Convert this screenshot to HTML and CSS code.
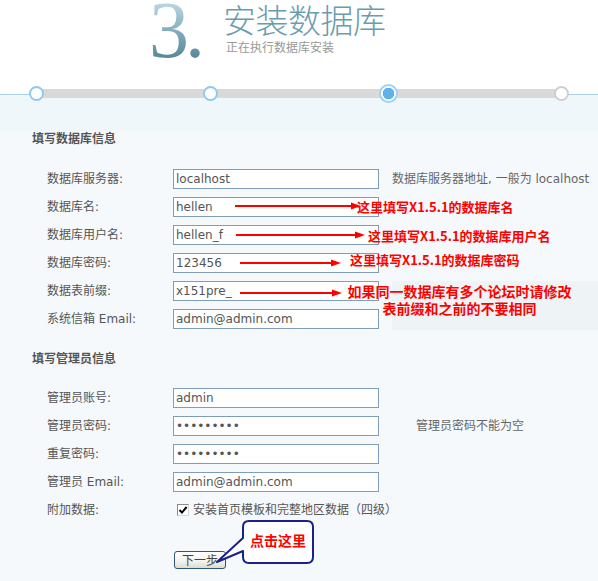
FILE: index.html
```html
<!DOCTYPE html>
<html lang="zh-CN">
<head>
<meta charset="utf-8">
<title>安装数据库</title>
<link rel="stylesheet" href="styles.css">
</head>
<body>
<div class="page">
  <header class="head">
    <div class="num">3.</div>
    <div class="titles">
      <div class="title">安装数据库</div>
      <div class="sub">正在执行数据库安装</div>
    </div>
  </header>

  <div class="steps">
    <div class="track">
      <span class="dot done"></span>
      <span class="dot done"></span>
      <span class="dot active"></span>
      <span class="dot todo"></span>
    </div>
  </div>

  <main class="main">
    <section class="sec first">
      <h2 class="sec-title">填写数据库信息</h2>
      <div class="grid">
        <label class="lbl">数据库服务器:</label>
        <input class="inp" type="text" value="localhost">
        <div class="hint">数据库服务器地址, 一般为 localhost</div>

        <label class="lbl">数据库名:</label>
        <input class="inp" type="text" value="hellen">

        <label class="lbl">数据库用户名:</label>
        <input class="inp" type="text" value="hellen_f">

        <label class="lbl">数据库密码:</label>
        <input class="inp" type="text" value="123456">

        <div class="hint-box"></div>

        <label class="lbl">数据表前缀:</label>
        <input class="inp" type="text" value="x151pre_">

        <label class="lbl">系统信箱 Email:</label>
        <input class="inp" type="text" value="admin@admin.com">
      </div>
    </section>

    <section class="sec second">
      <h2 class="sec-title">填写管理员信息</h2>
      <div class="grid admin">
        <label class="lbl">管理员账号:</label>
        <input class="inp" type="text" value="admin">

        <label class="lbl">管理员密码:</label>
        <input class="inp" type="password" value="123456789">
        <div class="hint hint-pw">管理员密码不能为空</div>

        <label class="lbl">重复密码:</label>
        <input class="inp" type="password" value="123456789">

        <label class="lbl">管理员 Email:</label>
        <input class="inp" type="text" value="admin@admin.com">

        <label class="lbl">附加数据:</label>
        <div class="check-row">
          <span class="cb"><svg width="10" height="10" viewBox="0 0 10 10"><path d="M1.5 5 L4 7.6 L8.6 2" fill="none" stroke="#000" stroke-width="2"/></svg></span>
          <span class="cb-text">安装首页模板和完整地区数据（四级）</span>
        </div>
      </div>
      <div class="actions">
        <button class="btn" type="button">下一步</button>
      </div>
    </section>
  </main>

  <div class="overlay">
    <svg class="arrows" width="598" height="581" viewBox="0 0 598 581">
      <g stroke="#ff0000" stroke-width="2" fill="none">
        <path d="M235 206 H354"/>
        <path d="M236 235 H357"/>
        <path d="M240 263 H333"/>
        <path d="M240 293 H334"/>
      </g>
      <g fill="#ff0000">
        <polygon points="351,202.5 361,206 351,209.5"/>
        <polygon points="355,231.5 365,235 355,238.5"/>
        <polygon points="331,259.5 341,263 331,266.5"/>
        <polygon points="332,289.5 342,293 332,296.5"/>
      </g>
      <path class="bubble" d="M249 521 H307 Q313 521 313 527 V557 Q313 563 307 563 H249 Q243 563 243 557 V551 L217 562 L243 538 V527 Q243 521 249 521 Z" fill="#ffffff" stroke="#1b2186" stroke-width="2" stroke-linejoin="round"/>
    </svg>
    <div class="note n1">这里填写X1.5.1的数据库名</div>
    <div class="note n2">这里填写X1.5.1的数据库用户名</div>
    <div class="note n3">这里填写X1.5.1的数据库密码</div>
    <div class="note n4">如果同一数据库有多个论坛时请修改<br>表前缀和之前的不要相同</div>
    <div class="call-text">点击这里</div>
  </div>
</div>
</body>
</html>
```

FILE: styles.css
```css
* {
  box-sizing: border-box;
}

html,
body {
  margin: 0;
  padding: 0;
}

body {
  background: #f5f9fc;
  font-family: "DejaVu Sans", "Noto Sans CJK SC", sans-serif;
  font-size: 12px;
  color: #555;
}

.page {
  position: relative;
  width: 598px;
  height: 581px;
  overflow: hidden;
}

/* ---------- header ---------- */
.head {
  height: 89px;
  background: #fff;
  display: flex;
  padding-left: 149px;
}

.num {
  width: 74px;
  height: 60px;
  font-family: "Liberation Serif", serif;
  font-size: 80px;
  line-height: 60px;
  letter-spacing: -4px;
  background: linear-gradient(#bcd6e1 3px, #86adbd 30px, #5a899b 57px);
  -webkit-background-clip: text;
  background-clip: text;
  color: transparent;
}

.titles {
  font-family: "Noto Sans CJK SC", sans-serif;
}

.title {
  font-size: 33px;
  line-height: 38px;
  font-weight: 300;
  letter-spacing: -0.5px;
  color: #6a9cae;
}

.sub {
  margin-left: 3px;
  font-size: 12px;
  line-height: 18px;
  color: #999;
}

/* ---------- steps ---------- */
.steps {
  height: 9px;
  background: linear-gradient(#fff 0 5px, #a9d2e2 5px 6px, #eff7fb 6px);
}

.track {
  margin: 0 29px;
  height: 9px;
  display: flex;
  justify-content: space-between;
  align-items: center;
  background: linear-gradient(#d9d9d9, #d9d9d9) 7px 0 / calc(100% - 14px) 100% no-repeat;
}

.dot {
  display: block;
  width: 15px;
  height: 15px;
  border-radius: 50%;
  background: #fff;
  flex: none;
}

.dot.done {
  border: 2.5px solid #8ccaf0;
}

.dot.active {
  width: 19px;
  height: 19px;
  margin-left: 3px;
  margin-right: -3px;
  border: 2px solid #9fd2f4;
  background: radial-gradient(circle, #5fb3ea 0 5px, #4fa6e2 5.5px, #fff 6px);
}

.dot.todo {
  border: 2.5px solid #cfcfcf;
}

/* ---------- main ---------- */
.main {
  height: 483px;
  background: linear-gradient(#eff7fb 0 33px, #f5f9fc 33px);
}

.sec.first {
  padding-top: 32px;
}

.sec.second {
  margin-top: 21px;
}

.sec-title {
  margin: 0;
  padding-left: 32px;
  font-family: "Noto Sans CJK SC", sans-serif;
  font-size: 12px;
  line-height: 16px;
  font-weight: bold;
  color: #555;
}

.grid {
  display: grid;
  grid-template-columns: 126px 219px 1fr;
  grid-auto-rows: 20px;
  row-gap: 8px;
  align-items: center;
  padding-left: 47px;
  margin-top: 23px;
}

.grid.admin {
  margin-top: 22px;
}

.lbl {
  grid-column: 1;
  font-size: 12px;
  line-height: 16px;
  color: #555;
  white-space: nowrap;
}

.inp {
  grid-column: 2;
  display: block;
  width: 206px;
  height: 20px;
  margin: 0;
  padding: 0 2px;
  border: 1px solid #7f9db9;
  border-radius: 0;
  background: #fff;
  font-family: "DejaVu Sans", sans-serif;
  font-size: 12px;
  color: #555;
  outline: none;
}

.hint {
  grid-column: 3;
  font-size: 12px;
  line-height: 16px;
  color: #666;
  white-space: nowrap;
}

.hint-pw {
  padding-left: 24px;
}

.hint-box {
  grid-column: 3;
  grid-row: 5 / span 2;
  align-self: stretch;
  margin-bottom: -1px;
  background: #eef3f6;
}

.check-row {
  grid-column: 2 / span 2;
  display: flex;
  align-items: center;
  gap: 4px;
  padding-left: 4px;
}

.cb {
  width: 12px;
  height: 12px;
  flex: none;
  display: flex;
  align-items: center;
  justify-content: center;
  border: 1px solid #8a8a8a;
  border-right-color: #d8d8d8;
  border-bottom-color: #d8d8d8;
  background: #fff;
}

.cb-text {
  font-size: 12px;
  line-height: 16px;
  color: #555;
  white-space: nowrap;
}

.actions {
  margin-top: 31px;
  padding-left: 174px;
}

.btn {
  display: block;
  width: 52px;
  height: 18px;
  margin: 0;
  padding: 0;
  border: 1px solid #2c5878;
  border-radius: 3px;
  background: linear-gradient(#ffffff, #f4f3ee 55%, #dedbd0);
  font-family: "Noto Sans CJK SC", sans-serif;
  font-size: 12px;
  line-height: 16px;
  color: #444;
}

/* ---------- annotations overlay ---------- */
.overlay {
  position: absolute;
  inset: 0;
  pointer-events: none;
}

.arrows {
  position: absolute;
  left: 0;
  top: 0;
}

.note {
  position: absolute;
  font-family: "Noto Sans CJK SC", sans-serif;
  font-size: 13px;
  line-height: 16px;
  font-weight: bold;
  color: #ff0000;
  white-space: nowrap;
}

.n1 {
  left: 357px;
  top: 199px;
}

.n2 {
  left: 368px;
  top: 228px;
}

.n3 {
  left: 350px;
  top: 252px;
}

.n4 {
  left: 339px;
  top: 283px;
  width: 241px;
  font-size: 14px;
  line-height: 17px;
  text-align: center;
}

.call-text {
  position: absolute;
  left: 243px;
  top: 531px;
  width: 70px;
  font-family: "Noto Sans CJK SC", sans-serif;
  font-size: 14px;
  line-height: 18px;
  font-weight: bold;
  color: #ff0000;
  text-align: center;
}
```
